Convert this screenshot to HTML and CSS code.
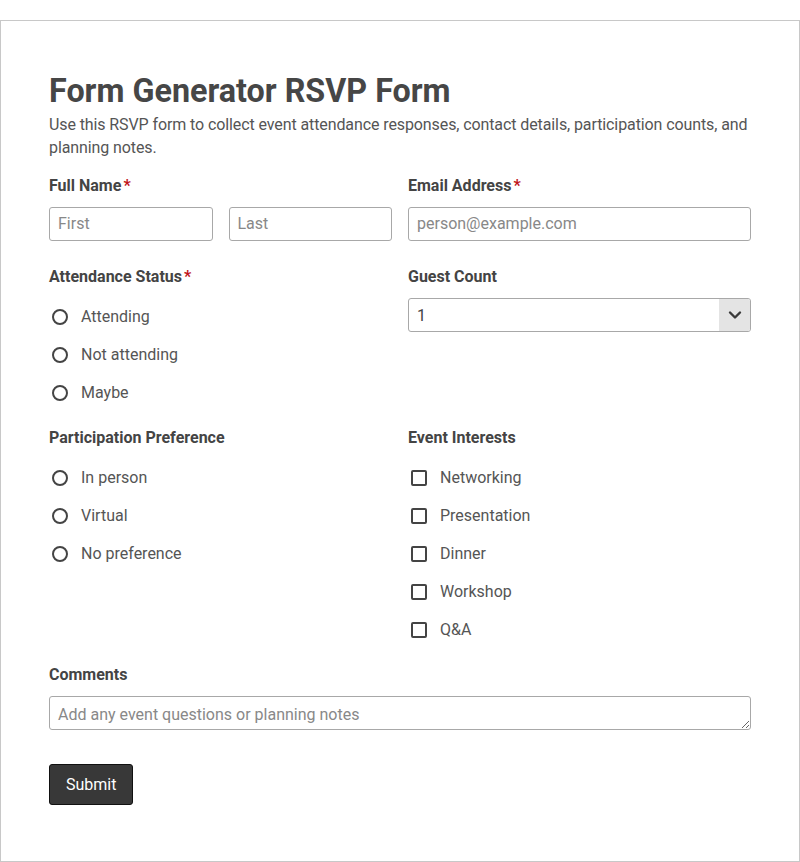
FILE: index.html
```html
<!DOCTYPE html>
<html lang="en">
<head>
  <meta charset="UTF-8">
  <meta name="viewport" content="width=device-width, initial-scale=1.0">
  <title>Form Generator RSVP Form</title>
  <link rel="stylesheet" href="styles.css">
</head>
<body>
  <div class="form-box">
    <h1 class="form-title">Form Generator RSVP Form</h1>
    <p class="form-desc">Use this RSVP form to collect event attendance responses, contact details, participation counts, and planning notes.</p>

    <form class="rsvp-form">
      <div class="form-row row-first">
        <div class="field">
          <label class="field-label">Full Name<span class="req">*</span></label>
          <div class="name-pair">
            <input type="text" class="text-input" placeholder="First">
            <input type="text" class="text-input" placeholder="Last">
          </div>
        </div>
        <div class="field">
          <label class="field-label" for="email">Email Address<span class="req">*</span></label>
          <input type="email" id="email" class="text-input" placeholder="person@example.com">
        </div>
      </div>

      <div class="form-row">
        <div class="field">
          <span class="field-label">Attendance Status<span class="req">*</span></span>
          <div class="option-list">
            <label class="option"><input type="radio" name="attendance"> Attending</label>
            <label class="option"><input type="radio" name="attendance"> Not attending</label>
            <label class="option"><input type="radio" name="attendance"> Maybe</label>
          </div>
        </div>
        <div class="field">
          <label class="field-label" for="guests">Guest Count</label>
          <div class="select-wrap">
            <select id="guests" class="select-input">
              <option>1</option>
              <option>2</option>
              <option>3</option>
              <option>4</option>
              <option>5</option>
            </select>
            <span class="select-arrow">
              <svg width="14" height="14" viewBox="0 0 14 14"><path d="M2 4.5 L7 9.5 L12 4.5" fill="none" stroke="#3a3a3a" stroke-width="2.4" stroke-linecap="round" stroke-linejoin="round"/></svg>
            </span>
          </div>
        </div>
      </div>

      <div class="form-row">
        <div class="field">
          <span class="field-label">Participation Preference</span>
          <div class="option-list">
            <label class="option"><input type="radio" name="pref"> In person</label>
            <label class="option"><input type="radio" name="pref"> Virtual</label>
            <label class="option"><input type="radio" name="pref"> No preference</label>
          </div>
        </div>
        <div class="field">
          <span class="field-label">Event Interests</span>
          <div class="option-list">
            <label class="option"><input type="checkbox"> Networking</label>
            <label class="option"><input type="checkbox"> Presentation</label>
            <label class="option"><input type="checkbox"> Dinner</label>
            <label class="option"><input type="checkbox"> Workshop</label>
            <label class="option"><input type="checkbox"> Q&amp;A</label>
          </div>
        </div>
      </div>

      <div class="field">
        <label class="field-label" for="comments">Comments</label>
        <textarea id="comments" class="text-area" rows="1" placeholder="Add any event questions or planning notes"></textarea>
      </div>

      <div class="actions">
        <button type="submit" class="submit-btn">Submit</button>
      </div>
    </form>
  </div>
</body>
</html>
```

FILE: styles.css
```css
body {
  margin: 0;
  font-family: Roboto, "Liberation Sans", Arial, sans-serif;
  color: #444;
  background: #fff;
}

.form-box {
  margin-top: 20px;
  min-height: 842px;
  box-sizing: border-box;
  border: 1px solid #c8c8c8;
  padding: 48px;
}

.form-title {
  margin: 0;
  font-size: 32.3px;
  line-height: 44px;
  font-weight: 700;
  color: #464646;
}

.form-desc {
  margin: 0 0 15px;
  font-size: 16px;
  line-height: 23px;
  letter-spacing: -0.1px;
  color: #555;
}

.rsvp-form {
  display: flex;
  flex-direction: column;
  gap: 21px;
}

.row-first {
  margin-bottom: 3px;
}

.form-row {
  display: grid;
  grid-template-columns: 1fr 1fr;
  gap: 16px;
}

.field {
  display: flex;
  flex-direction: column;
}

.field-label {
  font-size: 16px;
  line-height: 24px;
  font-weight: 700;
  color: #444;
  margin-bottom: 9px;
}

.req {
  color: #c0141b;
  margin-left: 2px;
}

.name-pair {
  display: grid;
  grid-template-columns: 1fr 1fr;
  gap: 16px;
}

.text-input,
.select-input,
.text-area {
  box-sizing: border-box;
  width: 100%;
  height: 34px;
  border: 1px solid #a8a8a8;
  border-radius: 3px;
  padding: 0 8px;
  font-family: inherit;
  font-size: 16px;
  color: #444;
  background: #fff;
}

.text-input {
  padding-bottom: 2px;
}

.text-input::placeholder,
.text-area::placeholder {
  color: #888;
}

.select-wrap {
  position: relative;
}

.select-input {
  appearance: none;
  -webkit-appearance: none;
  padding-right: 40px;
}

.select-arrow {
  position: absolute;
  top: 1px;
  right: 1px;
  bottom: 1px;
  width: 31px;
  background: #e4e4e4;
  border-radius: 0 2px 2px 0;
  display: flex;
  align-items: center;
  justify-content: center;
  pointer-events: none;
}

.option-list {
  display: flex;
  flex-direction: column;
  gap: 14px;
  margin-top: 7px;
}

.option {
  display: flex;
  align-items: center;
  gap: 13px;
  font-size: 16px;
  line-height: 24px;
  color: #555;
}

.option input {
  appearance: none;
  -webkit-appearance: none;
  margin: 0 0 0 3px;
  width: 16px;
  height: 16px;
  border: 2px solid #444;
  box-sizing: border-box;
  background: #fff;
}

.option input[type="radio"] {
  border-radius: 50%;
}

.option input[type="checkbox"] {
  border-radius: 2px;
}

.text-area {
  display: block;
  padding: 8px 8px 4px;
  line-height: 20px;
  resize: vertical;
}

.actions {
  margin-top: 13px;
}

.submit-btn {
  background: #383838;
  color: #fff;
  border: 1px solid #111;
  border-radius: 3px;
  font-family: inherit;
  font-size: 16px;
  height: 41px;
  padding: 0 16px;
  cursor: pointer;
}
```
